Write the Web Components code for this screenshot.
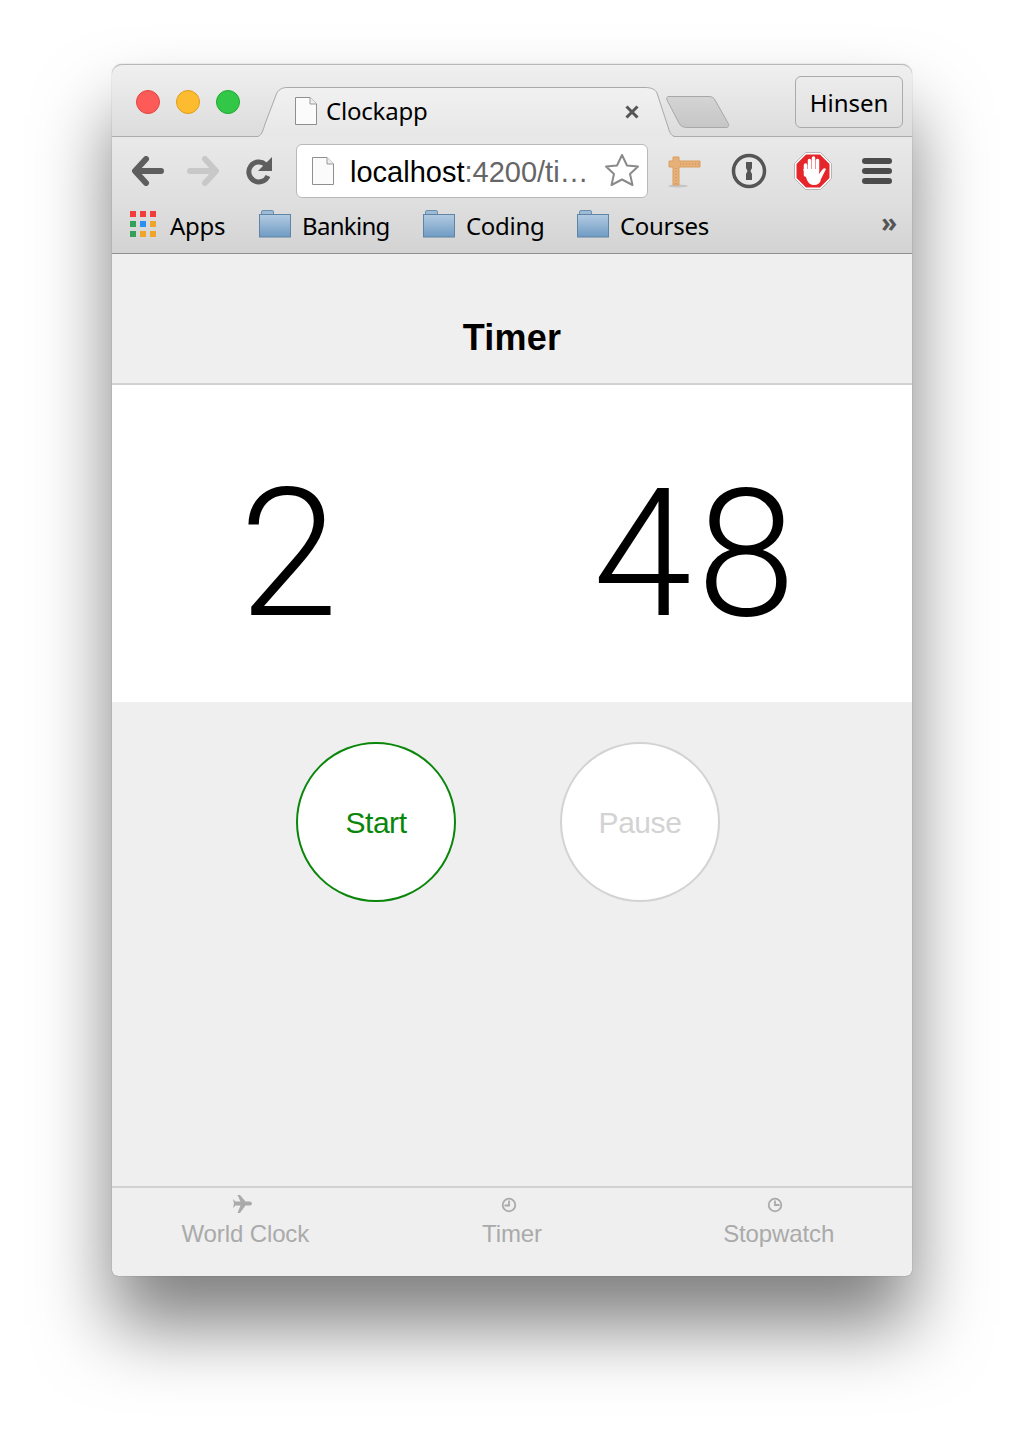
<!DOCTYPE html>
<html>
<head>
<meta charset="utf-8">
<title>Clockapp</title>
<style>
html,body{margin:0;background:#fff}
body{padding:64px 112px 160px;height:1436px;box-sizing:border-box;overflow:hidden;font-family:"Liberation Sans",sans-serif}
</style>
</head>
<body>
<browser-window>
  <window-tabstrip slot="chrome"></window-tabstrip>
  <window-toolbar slot="chrome"></window-toolbar>
  <bookmark-bar slot="chrome"></bookmark-bar>
  <app-header>Timer</app-header>
  <time-display hours="2" minutes="48"></time-display>
  <button-row>
    <round-button color="#0a860a">Start</round-button>
    <round-button color="#d3d3d3">Pause</round-button>
  </button-row>
  <tab-bar>
    <tab-item icon="plane">World Clock</tab-item>
    <tab-item icon="timer">Timer</tab-item>
    <tab-item icon="stopwatch">Stopwatch</tab-item>
  </tab-bar>
</browser-window>

<script>
const uiFont = '"Noto Sans","Open Sans",sans-serif';

function shadow(el, html){
    el.attachShadow({mode:'open'}).innerHTML = html;
}

const pageIcon = `<svg width="22" height="28" viewBox="0 0 22 28">
    <path d="M.5.5H15L21.5 7V27.5H.5Z" fill="#fbfbfb" stroke="#8f8f8f"/>
    <path d="M15 .5V7H21.5" fill="#eee" stroke="#9a9a9a"/>
</svg>`;

class BrowserWindow extends HTMLElement {
    constructor(){
        super();
        shadow(this, `<style>
            :host{display:flex;flex-direction:column;width:800px;height:1212px;background:#efefef;
                border-radius:10px 10px 6px 6px;box-shadow:0 50px 75px rgba(0,0,0,.5), 0 0 1px rgba(0,0,0,.5)}
        </style><slot name="chrome"></slot><slot></slot>`);
    }
}

class WindowTabstrip extends HTMLElement {
    constructor(){
        super();
        shadow(this, `<style>
            :host{display:flex;height:73px;box-sizing:border-box;border-top:1px solid #b8b8b8;border-bottom:1px solid #ababab;
                border-radius:10px 10px 0 0;padding-left:24px;background:linear-gradient(#f0f0f0,#dcdcdc);position:relative}
            .lights{display:flex;gap:16px;margin-top:25px;height:24px}
            .lights i{width:22px;height:22px;border-radius:50%;border:1px solid}
            .tab{position:relative;width:418px;height:50px;margin:22px 0 -1px 17px;display:flex;align-items:center;
                font:24px ${uiFont};color:#000}
            .tab svg.shape{position:absolute;left:0;top:0}
            .doc{position:relative;margin-left:38px;display:flex;margin-top:-3px}
            .title{position:relative;margin-left:9px;margin-top:-3px;letter-spacing:-.2px}
            .x{position:absolute;left:368px;top:18px}
            .newtab{margin:30px 0 0 -10px}
            .user{margin:11px 9px 0 auto;width:108px;height:52px;box-sizing:border-box;border:1px solid #aaa;border-radius:6px;
                display:flex;align-items:center;justify-content:center;font:24px ${uiFont};color:#000;
                background:linear-gradient(#ececec,#e0e0e0)}
        </style>
        <div class="lights">
            <i style="background:#fc5b57;border-color:#e2463f"></i>
            <i style="background:#fdbb2f;border-color:#e09e1a"></i>
            <i style="background:#33c748;border-color:#1fa82e"></i>
        </div>
        <div class="tab">
            <svg class="shape" width="418" height="50" viewBox="0 0 418 50">
                <defs><linearGradient id="t" x1="0" x2="0" y1="0" y2="1"><stop offset="0" stop-color="#f1f1f1"/><stop offset="1" stop-color="#e7e7e7"/></linearGradient></defs>
                <path d="M0 49.5C4 49.5 6 44 8 37L19 8C21 2 26 .5 30 .5H388C394 .5 398 2 400 6L412 43C413 46 415 49.5 418 49.5V50H0Z" fill="url(#t)"/>
                <path d="M0 49.5C4 49.5 6 44 8 37L19 8C21 2 26 .5 30 .5H388C394 .5 398 2 400 6L412 43C413 46 415 49.5 418 49.5" fill="none" stroke="#a9a9a9"/>
            </svg>
            <span class="doc">${pageIcon}</span>
            <span class="title">Clockapp</span>
            <svg class="x" width="14" height="14" viewBox="0 0 14 14"><path d="M1.5 1.5L12.5 12.5M12.5 1.5L1.5 12.5" stroke="#555" stroke-width="3"/></svg>
        </div>
        <svg class="newtab" width="66" height="34" viewBox="0 0 66 34">
            <defs><linearGradient id="n" x1="0" x2="0" y1="0" y2="1"><stop offset="0" stop-color="#d4d4d4"/><stop offset="1" stop-color="#c6c6c6"/></linearGradient></defs>
            <path d="M4 1.5H44C47 1.5 49 3 50 5L63 28C64.500 30.500 63.500 32.500 61 32.500H22C18 32.500 15.500 31 14 28L2 5C1 3 2 1.500 4 1.500Z" fill="url(#n)" stroke="#a8a8a8"/>
        </svg>
        <div class="user">Hinsen</div>`);
    }
}

class WindowToolbar extends HTMLElement {
    constructor(){
        super();
        shadow(this, `<style>
            :host{display:flex;align-items:center;height:64px;flex:none;background:linear-gradient(#e9e9e9,#dfdfdf);padding:6px 0 0 20px;box-sizing:border-box}
            svg{display:block;flex:none}
            .omni{margin-left:22px;width:352px;height:54px;box-sizing:border-box;border:1px solid #b9b9b9;border-radius:6px;background:#fff;
                display:flex;align-items:center;padding:0 7px 0 15px;font:29px "Liberation Sans",sans-serif;color:#000;margin-top:-2px}
            .url{margin:2px 0 0 16px;white-space:nowrap}
            .url span{color:#666}
            .star{margin-left:auto}
        </style>
        <svg width="32" height="30" viewBox="0 0 32 30" style="margin-top:-2px">
            <path d="M14 3L3 15L14 27M4 15H29" fill="none" stroke="#5e5e5e" stroke-width="6" stroke-linecap="round" stroke-linejoin="round"/>
        </svg>
        <svg width="32" height="30" viewBox="0 0 32 30" style="margin:-2px 0 0 23px">
            <path d="M18 3L29 15L18 27M3 15H28" fill="none" stroke="#c8c8c8" stroke-width="6" stroke-linecap="round" stroke-linejoin="round"/>
        </svg>
        <svg width="30" height="30" viewBox="0 0 30 30" style="margin:-2px 0 0 25px">
            <path d="M21.500 8.500A10 10 0 1 0 24 20" fill="none" stroke="#5e5e5e" stroke-width="5"/>
            <path d="M28 1V15H14Z" fill="#5e5e5e"/>
        </svg>
        <div class="omni">
            ${pageIcon}
            <div class="url">localhost<span>:4200/ti…</span></div>
            <svg class="star" width="36" height="36" viewBox="0 0 36 36">
                <path d="M18 2L23 12.500L34 13.500L26 21L28.500 32L18 26.500L7.500 32L10 21L2 13.500L13 12.500Z" fill="#fff" stroke="#8a8a8a" stroke-width="2" stroke-linejoin="round"/>
            </svg>
        </div>
        <svg width="34" height="34" viewBox="0 0 34 34" style="margin:-2px 0 0 20px">
            <ellipse cx="10" cy="32" rx="10" ry="1.500" fill="#c4c4c4"/>
            <path d="M5 3H11V7H32V13H11V31H5V13H1V7H5Z" fill="#e6b078" stroke="#d99f5f"/>
            <path d="M8 14V30M12 10H31" stroke="#c98c4d" stroke-dasharray="1 2" fill="none"/>
        </svg>
        <svg width="36" height="36" viewBox="0 0 36 36" style="margin:-2px 0 0 29px">
            <circle cx="18" cy="18" r="15.500" fill="#e7e7e7" stroke="#555" stroke-width="3.500"/>
            <path d="M15 9H21V15L19.500 18L21 21V27H15V21L16.500 18L15 15Z" fill="#555"/>
        </svg>
        <svg width="38" height="38" viewBox="0 0 38 38" style="margin:-2px 0 0 27px">
            <path d="M11.500 .5H26.500L37.500 11.500V26.500L26.500 37.500H11.500L.5 26.500V11.500Z" fill="#fff" stroke="#b5b5b5"/>
            <path d="M12 2.500H26L35.500 12V26L26 35.500H12L2.500 26V12Z" fill="#e5262a"/>
            <path d="M11.500 13V23M15.500 8.500V20M19.500 6V20M23.500 8.500V20" stroke="#fff" stroke-width="3.500" stroke-linecap="round"/>
            <path d="M9.500 18L13 28Q15 33 20 33Q26 33 27 27L32 17Q30 15 28 18L25 22V17H9.500Z" fill="#fff"/>
        </svg>
        <svg width="30" height="26" viewBox="0 0 30 26" style="margin:-2px 0 0 30px">
            <rect y="0" width="30" height="6" rx="3" fill="#4c4c4c"/><rect y="10" width="30" height="6" rx="3" fill="#4c4c4c"/><rect y="20" width="30" height="6" rx="3" fill="#4c4c4c"/>
        </svg>`);
    }
}

class BookmarkBar extends HTMLElement {
    constructor(){
        super();
        const folder = `<svg width="32" height="28" viewBox="0 0 32 28" style="display:block;flex:none;margin-top:-2px">
            <defs><linearGradient id="f" x1="0" x2="0" y1="0" y2="1"><stop offset="0" stop-color="#b3cbe2"/><stop offset="1" stop-color="#6f9bc3"/></linearGradient></defs>
            <path d="M2.500 4.500V2Q2.500 .5 4 .5H13Q14.500 .5 14.500 2V4.500Z" fill="#9dbad6" stroke="#6d8fae"/>
            <rect x=".5" y="4.500" width="31" height="22.500" fill="url(#f)" stroke="#5f84a5"/>
        </svg>`;
        const cols = ['#f33c3c','#f33c3c','#f33c3c','#34a15a','#2b8ff0','#f0a42a','#34a15a','#f0a42a','#f0a42a'];
        shadow(this, `<style>
            :host{display:flex;align-items:center;height:53px;flex:none;box-sizing:border-box;padding:0 0 4px 18px;border-bottom:1px solid #8f8f8f;
                background:linear-gradient(#dfdfdf,#d3d3d3);font:24px ${uiFont};letter-spacing:-.3px;color:#000}
            .grid{display:grid;grid-template-columns:repeat(3,6px);gap:4px;flex:none;margin-top:-2px}
            .grid i{height:6px}
            span{margin-left:14px;width:56px}
            .i{display:flex;align-items:center;box-sizing:border-box}
            .i span{margin-left:11px;width:auto}
            .more{margin:-7px 15px 0 auto;color:#555;font-size:26px;font-weight:bold}
        </style>
        <div class="grid">${cols.map(c => `<i style="background:${c}"></i>`).join('')}</div>
        <span>Apps</span>
        <div class="i" style="width:164px;margin-left:33px;letter-spacing:-.7px">${folder}<span>Banking</span></div>
        <div class="i" style="width:154px">${folder}<span>Coding</span></div>
        <div class="i">${folder}<span>Courses</span></div>
        <div class="more">»</div>`);
    }
}

class AppHeader extends HTMLElement {
    constructor(){
        super();
        shadow(this, `<style>
            :host{display:flex;justify-content:center;align-items:flex-end;flex:none;height:131px;box-sizing:border-box;padding-bottom:24px;
                background:#efefef;border-bottom:2px solid #d2d2d2;font:bold 36px/42px "Liberation Sans",sans-serif;letter-spacing:.2px;color:#000}
        </style><slot></slot>`);
    }
}

class TimeDisplay extends HTMLElement {
    constructor(){
        super();
        shadow(this, `<style>
            :host{display:flex;justify-content:center;gap:202px;flex:none;height:317px;box-sizing:border-box;padding:63px 40px 0 0;
                background:#fff;font:300 178px/212px Roboto,"Liberation Sans",sans-serif;letter-spacing:5px;color:#000}
            div{width:200px;text-align:center}
        </style>
        <div>${this.getAttribute('hours')}</div><div>${this.getAttribute('minutes')}</div>`);
    }
}

class ButtonRow extends HTMLElement {
    constructor(){
        super();
        shadow(this, `<style>
            :host{display:flex;justify-content:center;gap:104px;flex:1;padding:40px 8px 0 0;box-sizing:border-box;align-items:flex-start}
        </style><slot></slot>`);
    }
}

class RoundButton extends HTMLElement {
    constructor(){
        super();
        const c = this.getAttribute('color');
        shadow(this, `<style>
            :host{display:flex;align-items:center;justify-content:center;width:160px;height:160px;box-sizing:border-box;border-radius:50%;padding-top:2px;
                background:#fff;border:2px solid ${c};color:${c};font:30px "Liberation Sans",sans-serif;letter-spacing:-.45px}
        </style><slot></slot>`);
    }
}

class TabBar extends HTMLElement {
    constructor(){
        super();
        shadow(this, `<style>
            :host{display:grid;grid-template-columns:repeat(3,1fr);flex:none;height:90px;box-sizing:border-box;border-top:2px solid #d2d2d2}
        </style><slot></slot>`);
    }
}

const tabIcons = {
    plane: `<path d="M1 5L3.500 7.500H8.500L5.500 1H8L13.500 7.500H18C20.500 7.500 20.500 11.500 18 11.500H13.500L8 19H5.500L8.500 11.500H3.500L1 14L2 9.500Z" fill="#aaa"/>`,
    timer: `<circle cx="10" cy="11" r="6.300" fill="none" stroke="#aaa" stroke-width="1.800"/><path d="M10 6.500V11.500H5.500" fill="none" stroke="#aaa" stroke-width="1.800"/>`,
    stopwatch: `<circle cx="10" cy="11" r="6.300" fill="none" stroke="#aaa" stroke-width="1.800"/><path d="M10 6.500V11H14.500" fill="none" stroke="#aaa" stroke-width="1.800"/>`
};

class TabItem extends HTMLElement {
    constructor(){
        super();
        const x = this.getAttribute('icon') == 'stopwatch' ? -8 : -6;
        shadow(this, `<style>
            :host{display:flex;flex-direction:column;align-items:center;padding-top:6px;
                font:24px/30px "Liberation Sans",sans-serif;letter-spacing:-.12px;color:#aaa}
            svg{display:block;margin:0 0 5px ${x}px}
        </style>
        <svg width="20" height="20" viewBox="0 0 20 20">${tabIcons[this.getAttribute('icon')]}</svg>
        <slot></slot>`);
    }
}

customElements.define('browser-window', BrowserWindow);
customElements.define('window-tabstrip', WindowTabstrip);
customElements.define('window-toolbar', WindowToolbar);
customElements.define('bookmark-bar', BookmarkBar);
customElements.define('app-header', AppHeader);
customElements.define('time-display', TimeDisplay);
customElements.define('button-row', ButtonRow);
customElements.define('round-button', RoundButton);
customElements.define('tab-bar', TabBar);
customElements.define('tab-item', TabItem);
</script>
</body>
</html>
